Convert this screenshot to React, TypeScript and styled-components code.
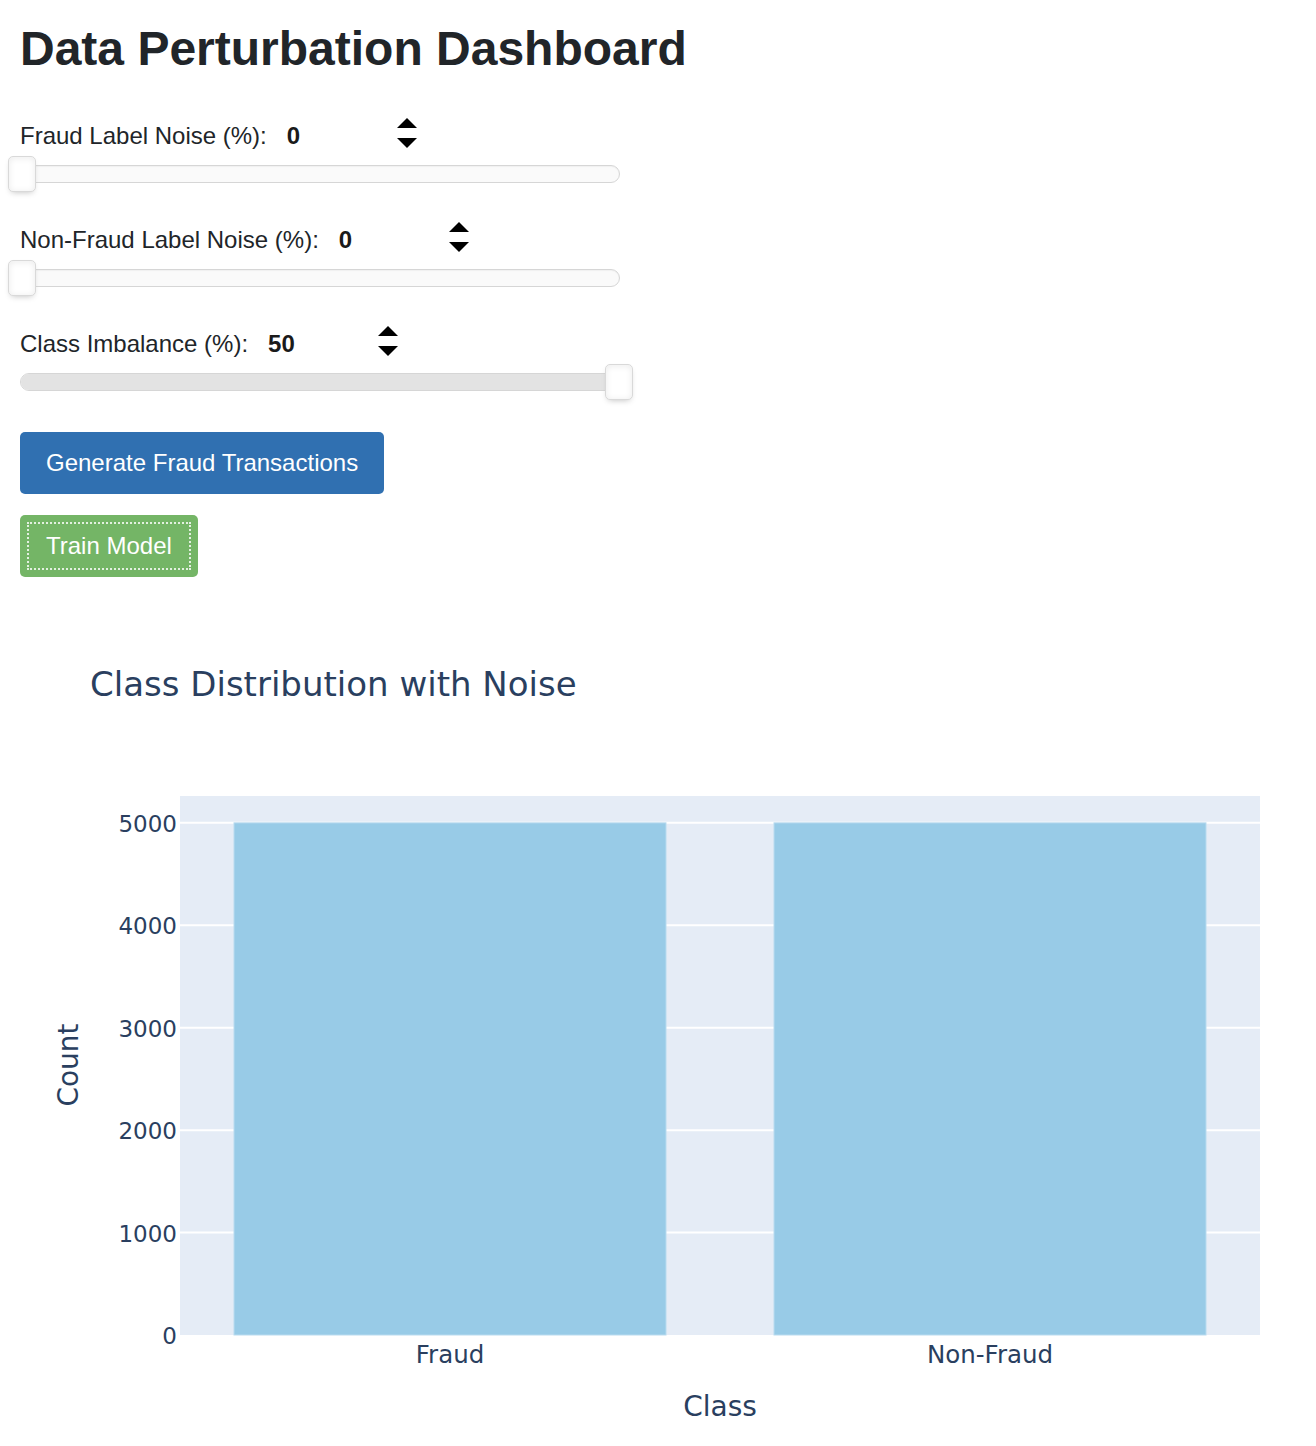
import styled, { createGlobalStyle } from 'styled-components';

const GlobalStyle = createGlobalStyle`
  body {
    margin: 0;
    background: #ffffff;
    font-family: "Liberation Sans", Arial, sans-serif;
    color: #212529;
  }
`;

const Page = styled.div`
  width: 1316px;
  height: 1446px;
  overflow: hidden;
`;

const Controls = styled.div`
  display: flex;
  flex-direction: column;
  padding: 0 20px;
`;

const Heading = styled.h1`
  margin: 0;
  padding-top: 20px;
  font-size: 48px;
  line-height: 57px;
  font-weight: 700;
  color: #212529;
  margin-bottom: 42px;
`;

const ControlGroup = styled.div`
  display: flex;
  flex-direction: column;
  gap: 3px;
  margin-bottom: 31px;
`;

const LabelRow = styled.div`
  display: flex;
  align-items: center;
  height: 34px;
`;

const Label = styled.span`
  font-size: 24px;
`;

const ValueBox = styled.div`
  display: flex;
  align-items: center;
  justify-content: space-between;
  width: 130px;
  margin-left: 20px;
`;

const Value = styled.span`
  font-size: 24px;
  font-weight: 700;
  color: #1a1a1a;
`;

const SpinnerIcon = styled.svg`
  display: block;
  margin-bottom: 6px;
`;

const SliderWrap = styled.div`
  position: relative;
  width: 624px;
  height: 36px;
  margin-left: -12px;
`;

const Track = styled.div`
  position: relative;
  margin: 9px 12px 0;
  height: 16px;
  border: 1px solid #d6d6d6;
  border-radius: 9px;
  background: #fafafa;
  box-shadow: inset 0 1px 1px #f0f0f0;
  overflow: hidden;
`;

const Fill = styled.div`
  height: 100%;
  background: #e3e3e3;
`;

const Handle = styled.div`
  position: absolute;
  top: 0;
  width: 26px;
  height: 34px;
  border: 1px solid #d9d9d9;
  border-radius: 5px;
  background: #ffffff;
  box-shadow: inset 0 0 1px #fff, inset 0 1px 7px #ebebeb, 0 3px 6px -3px #bbb;
`;

const ButtonStack = styled.div`
  display: flex;
  flex-direction: column;
  align-items: flex-start;
  gap: 21px;
  margin-top: 1px;
`;

const Button = styled.button<{ tone: 'blue' | 'green'; focused?: boolean }>`
  height: 62px;
  padding: 0 26px;
  border: none;
  border-radius: 5px;
  background: ${(p) => (p.tone === 'blue' ? '#3070b1' : '#74b566')};
  color: #ffffff;
  font-family: "Liberation Sans", Arial, sans-serif;
  font-size: 24px;
  cursor: pointer;
  outline: ${(p) => (p.focused ? '2px dotted rgba(255,255,255,0.8)' : 'none')};
  outline-offset: -9px;
`;

const Chart = styled.svg`
  display: block;
  margin-top: 22px;
`;

function Spinner() {
  return (
    <SpinnerIcon width="20" height="30" viewBox="0 0 20 30">
      <polygon points="0,10 10,0 20,10" fill="#000" />
      <polygon points="0,20 20,20 10,30" fill="#000" />
    </SpinnerIcon>
  );
}

const controls = [
  { label: 'Fraud Label Noise (%):', value: 0, max: 100, filled: false },
  { label: 'Non-Fraud Label Noise (%):', value: 0, max: 100, filled: false },
  { label: 'Class Imbalance (%):', value: 50, max: 50, filled: true },
];

function SliderControl({ label, value, max, filled }: { label: string; value: number; max: number; filled: boolean }) {
  const frac = value / max;
  return (
    <ControlGroup>
      <LabelRow>
        <Label>{label}</Label>
        <ValueBox>
          <Value>{value}</Value>
          <Spinner />
        </ValueBox>
      </LabelRow>
      <SliderWrap>
        <Track>{filled && <Fill style={{ width: `${frac * 100}%` }} />}</Track>
        <Handle style={{ left: `${frac * 597}px` }} />
      </SliderWrap>
    </ControlGroup>
  );
}

// chart geometry, in page coords, svg starts at y=600
const OY = 600;
const plot = { x0: 180, x1: 1260, y0: 797, y1: 1336 };
const pxPerUnit = 0.10243;
const yOf = (v: number) => plot.y1 - v * pxPerUnit - OY;
const bars = [
  { name: 'Fraud', count: 5000 },
  { name: 'Non-Fraud', count: 5000 },
];
const ticks = [0, 1000, 2000, 3000, 4000, 5000];
const axisFont = '"DejaVu Sans", Verdana, sans-serif';

function BarChart() {
  const band = (plot.x1 - plot.x0) / bars.length;
  const barW = band * 0.8;
  return (
    <Chart width={1316} height={846} viewBox="0 0 1316 846">
      <text x={90} y={697 - OY} fontFamily={axisFont} fontSize={34} fill="#2a3f5f">
        Class Distribution with Noise
      </text>
      <rect x={plot.x0} y={plot.y0 - OY} width={plot.x1 - plot.x0} height={plot.y1 - plot.y0} fill="#e5ecf6" />
      {ticks.map((t) => (
        <g key={t}>
          {t > 0 && <line x1={plot.x0} x2={plot.x1} y1={yOf(t)} y2={yOf(t)} stroke="#ffffff" strokeWidth={2} />}
          <text x={177} y={yOf(t) + 9} textAnchor="end" fontFamily={axisFont} fontSize={23} fill="#2a3f5f">
            {t}
          </text>
        </g>
      ))}
      {bars.map((b, i) => {
        const cx = plot.x0 + band * (i + 0.5);
        return (
          <g key={b.name}>
            <rect
              x={cx - barW / 2}
              y={yOf(b.count)}
              width={barW}
              height={yOf(0) - yOf(b.count)}
              fill="#98cbe7"
              stroke="#b9dbef"
              strokeWidth={1}
            />
            <text x={cx} y={1364 - OY} textAnchor="middle" fontFamily={axisFont} fontSize={24.5} fill="#2a3f5f">
              {b.name}
            </text>
          </g>
        );
      })}
      <text x={720} y={1417 - OY} textAnchor="middle" fontFamily={axisFont} fontSize={28} fill="#2a3f5f">
        Class
      </text>
      <text
        transform={`translate(78 ${1066 - OY}) rotate(-90)`}
        textAnchor="middle"
        fontFamily={axisFont}
        fontSize={28}
        fill="#2a3f5f"
      >
        Count
      </text>
    </Chart>
  );
}

export default function App() {
  return (
    <Page>
      <GlobalStyle />
      <Controls>
        <Heading>Data Perturbation Dashboard</Heading>
        {controls.map((c) => (
          <SliderControl key={c.label} {...c} />
        ))}
        <ButtonStack>
          <Button tone="blue">Generate Fraud Transactions</Button>
          <Button tone="green" focused>
            Train Model
          </Button>
        </ButtonStack>
      </Controls>
      <BarChart />
    </Page>
  );
}
